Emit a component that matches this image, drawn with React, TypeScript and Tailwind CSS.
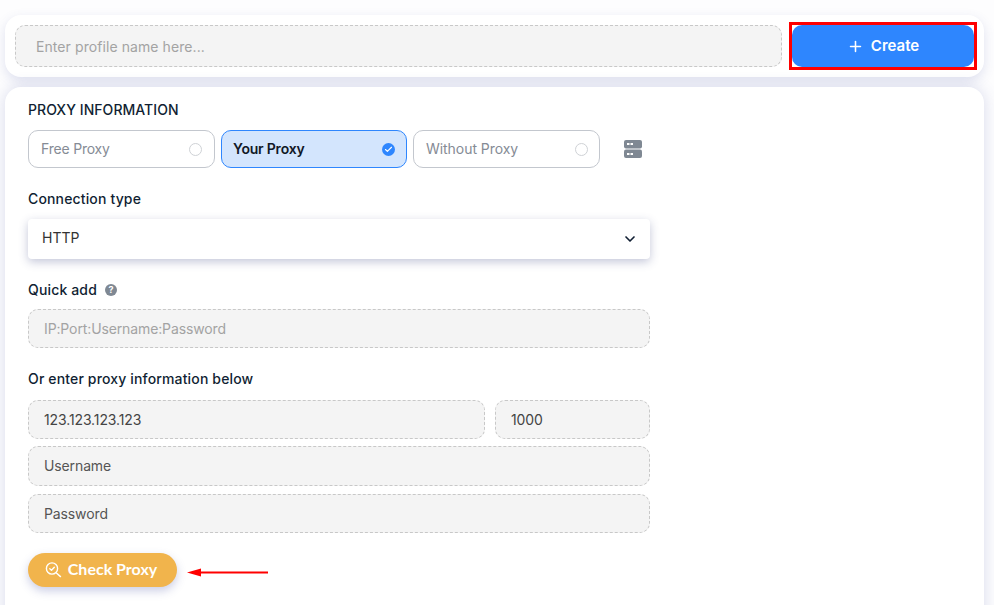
import {Check, ChevronDown, Plus} from "lucide-react"

const fieldClass = "h-[39px] flex items-center px-[15px] pb-[1px] bg-[#f4f4f4] rounded-[10px] border border-dashed border-[#c8c8c8] text-[14px] tracking-[-0.12px]"
const labelClass = "text-[14px] leading-[18px] font-medium tracking-[0.15px]"

function ProxyOption({label, active, className}: {label: string, active?: boolean, className: string}) {
    return <div
        className={`${className} h-[38px] flex items-center justify-between pb-[2px] rounded-[10px] border text-[14px] ${active ? 'bg-[#d3e5fd] border-[#2e86fe] font-semibold text-[#111827]' : 'bg-white border-[#c3c7ce] text-[#858b95]'}`}>
        <span>{label}</span>
        {active
            ? <span className="w-[13px] h-[13px] mt-[2px] rounded-full bg-[#2e86fe] flex items-center justify-center">
                <Check size={9} strokeWidth={3} className="text-white"/>
            </span>
            : <span className="w-[13px] h-[13px] mt-[2px] rounded-full border border-[#cfd2d6] bg-white"/>}
    </div>
}

function ServerIcon() {
    return <svg width="18" height="18" viewBox="0 0 18 18" className="ml-[18px]">
        <rect x="0" y="0" width="18" height="8.5" rx="2" fill="#7f8893"/>
        <rect x="0" y="9.5" width="18" height="8.5" rx="2" fill="#7f8893"/>
        <rect x="3" y="3" width="2.5" height="2" fill="#fff"/>
        <rect x="6.5" y="3" width="2.5" height="2" fill="#fff"/>
        <rect x="3" y="13" width="2.5" height="2" fill="#fff"/>
        <rect x="6.5" y="13" width="2.5" height="2" fill="#fff"/>
    </svg>
}

function CheckSearchIcon() {
    return <svg width="17" height="17" viewBox="0 0 17 17" fill="none" stroke="#fff" strokeWidth="1.4" strokeLinecap="round" strokeLinejoin="round">
        <circle cx="7" cy="7.5" r="5.6"/>
        <path d="M4.8 7.8 L6.5 9.3 L9.3 6.2"/>
        <path d="M11.4 12 L15.5 15.6"/>
    </svg>
}

export default function App() {
    return <div
        className="relative w-[994px] h-[605px] overflow-hidden bg-[#fdfdfe] pl-[5px] pr-[10px] pt-[15px] text-[#111f33]"
        style={{fontFamily: 'Inter, "Noto Sans", sans-serif'}}>
        <div className="h-[62px] flex items-center gap-[10px] px-[10px] bg-white rounded-[16px] shadow-[0_4px_12px_rgba(70,80,160,0.16)]">
            <div className="flex-1 h-[42px] flex items-center px-5 bg-[#f4f4f4] rounded-[10px] border border-dashed border-[#c8c8c8] text-[14px] text-[#a3a3a3] tracking-[0.08px]">
                Enter profile name here...
            </div>
            <div className="outline-[3px] outline-[#ff0000]">
                <div className="w-[182px] h-[42px] flex items-center justify-center gap-[7px] pt-[1px] bg-[#2e86fe] rounded-[10px] text-white text-[15px] font-semibold">
                    <Plus size={17} strokeWidth={2.2}/>
                    <span>Create</span>
                </div>
            </div>
        </div>

        <div className="mt-[10px] h-[560px] bg-white rounded-[16px] px-[23px] pt-[14px] shadow-[0_0_16px_rgba(70,80,160,0.2)]">
            <div className="w-[622px]">
                <div className={labelClass + " !tracking-[0.05px]"}>PROXY INFORMATION</div>

                <div className="mt-[11px] flex items-center gap-[6px]">
                    <ProxyOption label="Free Proxy" className="w-[187px] pl-3 pr-[12px] tracking-[-0.2px]"/>
                    <ProxyOption label="Your Proxy" className="w-[186px] pl-[11px] pr-[11px] tracking-[-0.2px]" active/>
                    <ProxyOption label="Without Proxy" className="w-[187px] pl-3 pr-[11px] tracking-[-0.05px]"/>
                    <ServerIcon/>
                </div>

                <div className={`mt-[22px] ${labelClass}`}>Connection type</div>
                <div className="mt-[11px] h-[40px] flex items-center justify-between pl-[14px] pr-[12px] pb-[3px] bg-white rounded-[4px] text-[14px] text-[#333] shadow-[0_3px_10px_rgba(60,70,130,0.3)]">
                    <span>HTTP</span>
                    <ChevronDown size={16} strokeWidth={2.5} className="text-[#111f33] mt-[3px]"/>
                </div>

                <div className="mt-[22px] flex items-center gap-[8px]">
                    <span className={labelClass}>Quick add</span>
                    <span className="w-3 h-3 rounded-full bg-[#7f8893] text-white text-[9px] font-bold flex items-center justify-center">?</span>
                </div>
                <div className={`mt-[10px] ${fieldClass} text-[#a3a3a3]`}>IP:Port:Username:Password</div>

                <div className={`mt-[22px] ${labelClass}`}>Or enter proxy information below</div>
                <div className="mt-[12px] flex gap-[10px]">
                    <div className={`flex-1 ${fieldClass} text-[#444]`}>123.123.123.123</div>
                    <div className={`w-[155px] ${fieldClass} text-[#444]`}>1000</div>
                </div>
                <div className={`mt-[7px] ${fieldClass} !h-[40px] text-[#555]`}>Username</div>
                <div className={`mt-[8px] ${fieldClass} text-[#555]`}>Password</div>

                <div className="mt-[20px] w-[149px] h-[34px] flex items-center justify-center gap-[6px] pr-[3px] pb-[2px] bg-[#f1b44c] rounded-full text-white text-[16px] font-bold shadow-[0_4px_10px_rgba(70,80,160,0.28)]"
                     style={{fontFamily: 'Lato, sans-serif'}}>
                    <CheckSearchIcon/>
                    <span>Check Proxy</span>
                </div>
            </div>
        </div>

        <svg width="82" height="10" viewBox="0 0 82 10" className="absolute left-[187px] top-[568px]">
            <path d="M0 4.5 L14 0.5 L14 3.5 L81 3.5 L81 5.5 L14 5.5 L14 8.5 Z" fill="#ff0000"/>
        </svg>
    </div>
}
